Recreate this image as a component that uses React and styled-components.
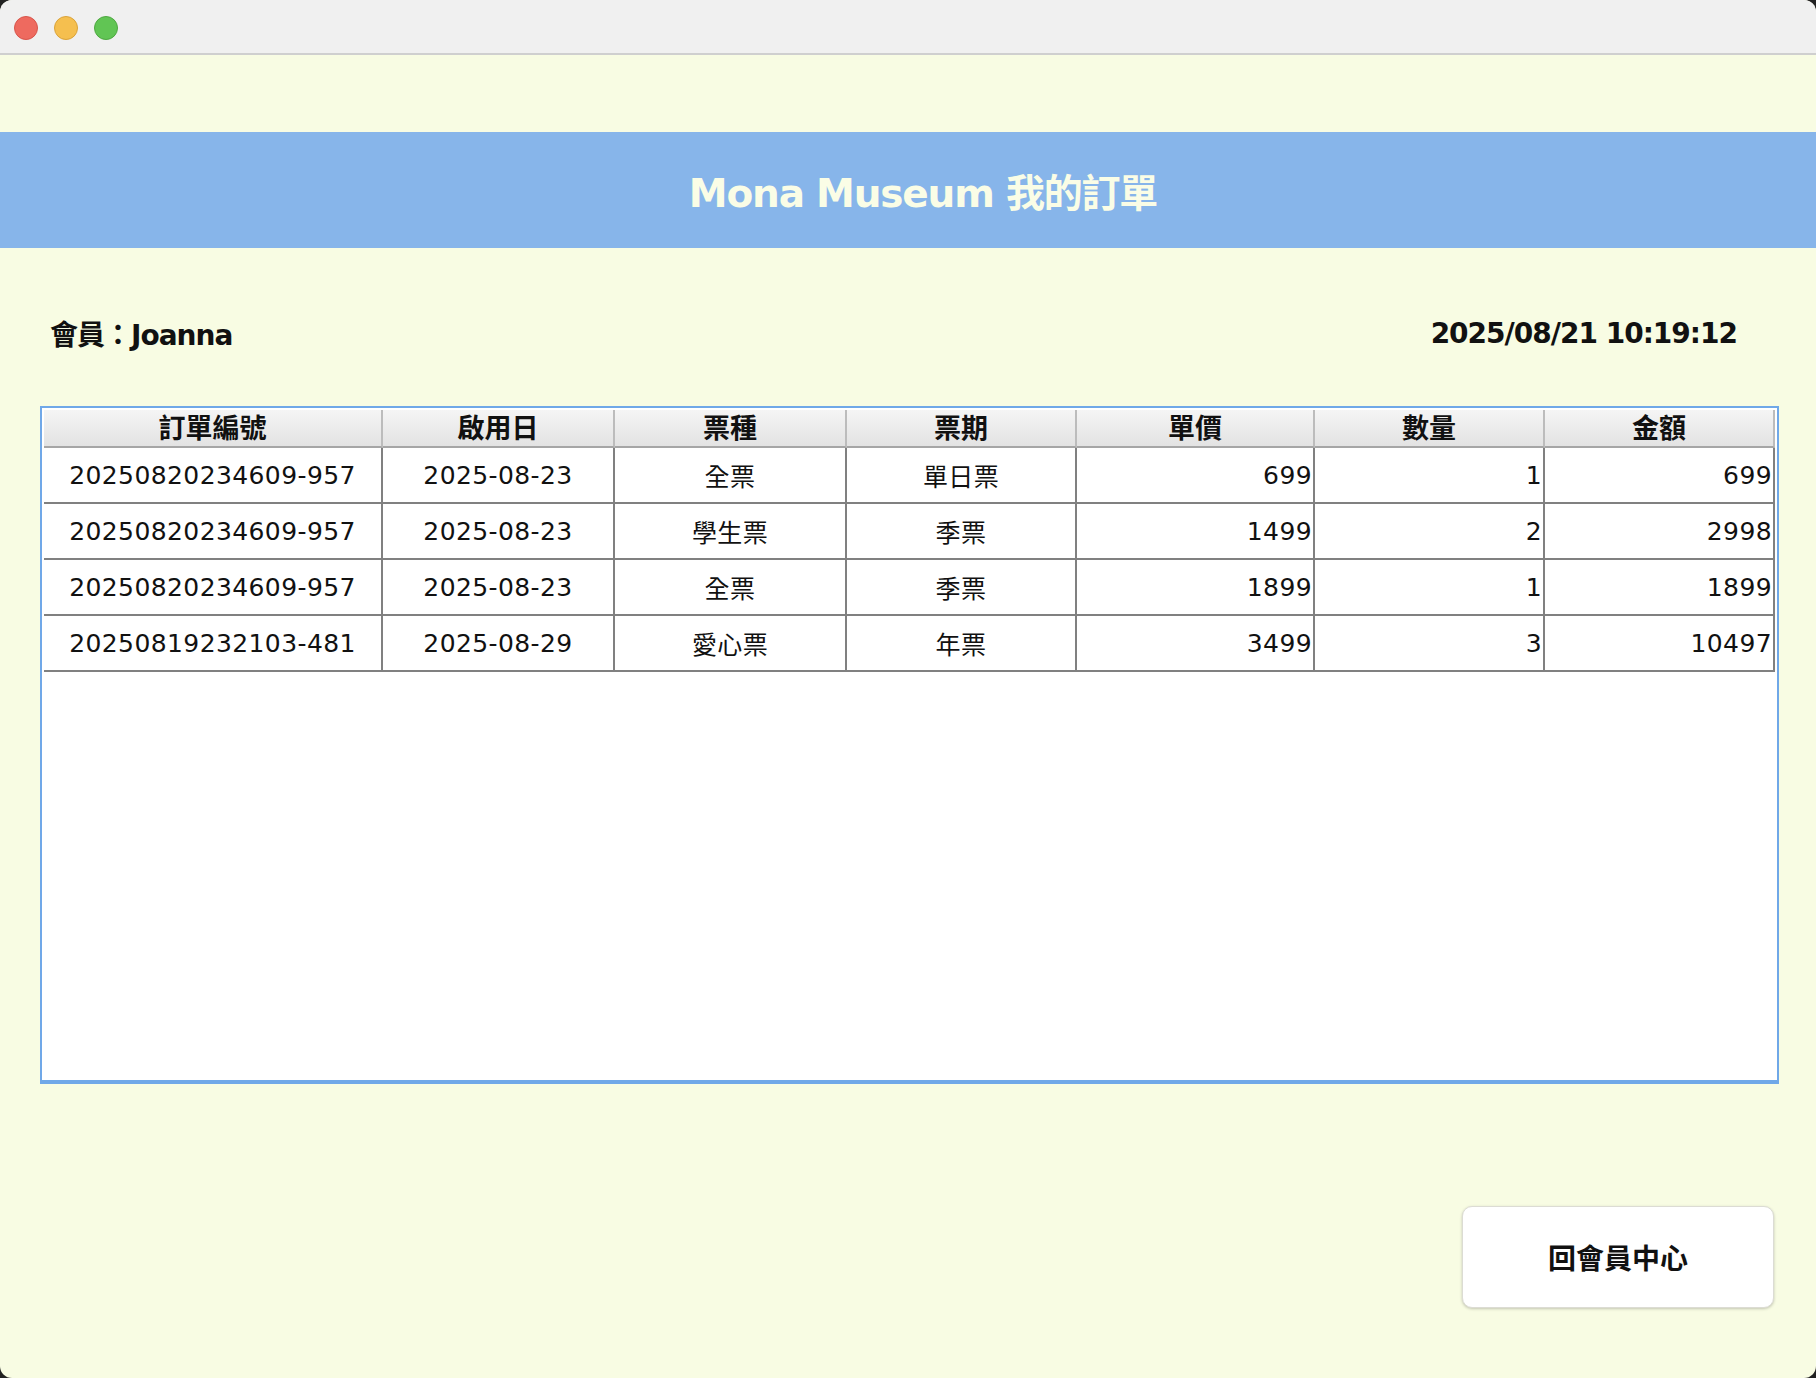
import React from "react";
import styled, { createGlobalStyle } from "styled-components";

const GlobalStyle = createGlobalStyle`
  html, body {
    margin: 0;
    padding: 0;
    background: #222222;
  }
  body {
    font-family: "DejaVu Sans", "Noto Sans CJK TC", sans-serif;
  }
  * { box-sizing: border-box; }
`;

const FONT = `"DejaVu Sans", "Noto Sans CJK TC", sans-serif`;

const Window = styled.div`
  width: 1816px;
  height: 1378px;
  border-radius: 12px;
  overflow: hidden;
  background: #f8fce3;
  display: flex;
  flex-direction: column;
`;

const TitleBar = styled.div`
  height: 55px;
  flex: none;
  background: #f0f0f0;
  border-bottom: 2px solid #cfcfcf;
  display: flex;
  align-items: center;
  padding: 2px 0 0 14px;
  gap: 16px;
`;

const Light = styled.span`
  width: 24px;
  height: 24px;
  border-radius: 50%;
  background: ${(p) => p.$fill};
  border: 1px solid ${(p) => p.$edge};
`;

const Content = styled.main`
  flex: 1;
  display: flex;
  flex-direction: column;
`;

const Banner = styled.header`
  margin-top: 77px;
  height: 116px;
  background: #87b5ea;
  display: flex;
  align-items: center;
  justify-content: center;
  padding-left: 30px;
`;

const Title = styled.h1`
  margin: 0;
  font-family: ${FONT};
  font-size: 39px;
  font-weight: bold;
  letter-spacing: -1.2px;
  color: #fafde6;
`;

const InfoRow = styled.div`
  margin-top: 54px;
  height: 62px;
  display: flex;
  align-items: center;
  justify-content: space-between;
  padding: 0 79px 0 50px;
`;

const InfoText = styled.span`
  font-family: ${FONT};
  font-size: 28px;
  font-weight: bold;
  letter-spacing: -1px;
  color: #111;
`;

const TablePane = styled.div`
  margin: 42px 37px 0 40px;
  height: 678px;
  border: 2px solid #70a8e8;
  border-bottom-width: 4px;
  background: #ffffff;
  padding: 2px;
`;

const Table = styled.div`
  display: grid;
  grid-template-columns: 339px 232px 232px 230px 238px 230px 230px;
`;

const HeadCell = styled.div`
  height: 38px;
  background: linear-gradient(#f5f5f5, #e3e3e3);
  border-right: 2px solid #bcbcbc;
  border-bottom: 2px solid #a6a6a6;
  display: flex;
  align-items: center;
  justify-content: center;
  padding-bottom: 3px;
  font-family: ${FONT};
  font-size: 27px;
  font-weight: bold;
  color: #111;
`;

const Cell = styled.div`
  height: 56px;
  border-right: 2px solid #808080;
  border-bottom: 2px solid #808080;
  display: flex;
  align-items: center;
  justify-content: ${(p) => (p.$num ? "flex-end" : "center")};
  padding-right: ${(p) => (p.$num ? "1px" : "0")};
  font-family: ${FONT};
  font-size: 25px;
  letter-spacing: 0.4px;
  color: #111;
`;

const ButtonRow = styled.div`
  margin-top: 122px;
  display: flex;
  justify-content: flex-end;
  padding-right: 42px;
`;

const BackButton = styled.button`
  width: 312px;
  height: 102px;
  border-radius: 10px;
  background: #ffffff;
  border: 1px solid #dcdcd4;
  box-shadow: 0 1px 3px rgba(0, 0, 0, 0.22);
  font-family: ${FONT};
  font-size: 28px;
  font-weight: bold;
  color: #111;
  cursor: pointer;
`;

const headers = ["訂單編號", "啟用日", "票種", "票期", "單價", "數量", "金額"];

const rows = [
  ["20250820234609-957", "2025-08-23", "全票", "單日票", "699", "1", "699"],
  ["20250820234609-957", "2025-08-23", "學生票", "季票", "1499", "2", "2998"],
  ["20250820234609-957", "2025-08-23", "全票", "季票", "1899", "1", "1899"],
  ["20250819232103-481", "2025-08-29", "愛心票", "年票", "3499", "3", "10497"],
];

export default function App() {
  return (
    <>
      <GlobalStyle />
      <Window>
        <TitleBar>
          <Light $fill="#ee6a5f" $edge="#d8554b" />
          <Light $fill="#f5bf4f" $edge="#daa33a" />
          <Light $fill="#61c554" $edge="#4ea841" />
        </TitleBar>
        <Content>
          <Banner>
            <Title>Mona Museum 我的訂單</Title>
          </Banner>
          <InfoRow>
            <InfoText>會員：Joanna</InfoText>
            <InfoText>2025/08/21 10:19:12</InfoText>
          </InfoRow>
          <TablePane>
            <Table>
              {headers.map((h) => (
                <HeadCell key={h}>{h}</HeadCell>
              ))}
              {rows.map((r, i) =>
                r.map((c, j) => (
                  <Cell key={`${i}-${j}`} $num={j >= 4}>
                    {c}
                  </Cell>
                ))
              )}
            </Table>
          </TablePane>
          <ButtonRow>
            <BackButton>回會員中心</BackButton>
          </ButtonRow>
        </Content>
      </Window>
    </>
  );
}
